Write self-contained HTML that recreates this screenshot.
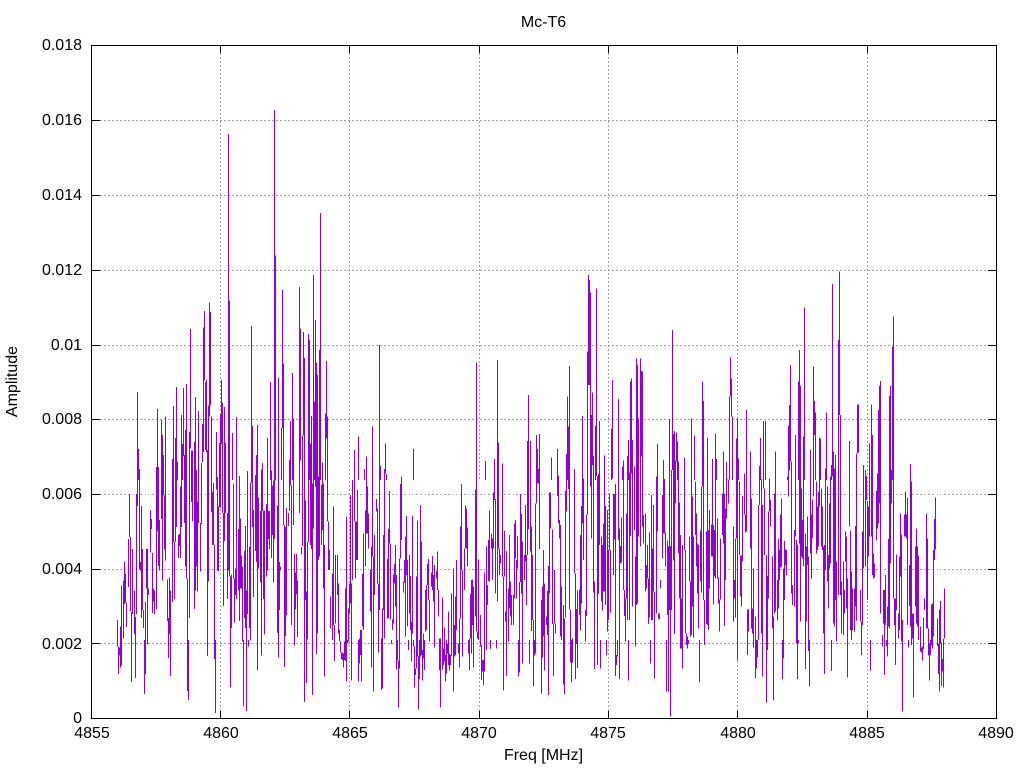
<!DOCTYPE html>
<html><head><meta charset="utf-8"><title>Mc-T6</title>
<style>
html,body{margin:0;padding:0;background:#fff}
svg{display:block}
text{font-family:"Liberation Sans",sans-serif;font-size:16px;fill:#000}
.d{fill:none;stroke:#9400d3;stroke-width:1;vector-effect:non-scaling-stroke;shape-rendering:crispEdges}
</style></head><body>
<svg width="1024" height="768" viewBox="0 0 1024 768" xmlns="http://www.w3.org/2000/svg">
<defs>
<pattern id="gaps" x="0" y="0" width="11" height="4" patternUnits="userSpaceOnUse">
<rect x="1" y="0" width="1" height="4" fill="#fff"/>
<rect x="6" y="0" width="1" height="4" fill="#fff"/>
</pattern>
</defs>
<rect width="1024" height="768" fill="#fff"/>
<g stroke="#a0a0a0" stroke-width="1" stroke-dasharray="2 2" fill="none" shape-rendering="crispEdges">
<path d="M220.5 45V718M349.5 45V718M479.5 45V718M608.5 45V718M737.5 45V718M867.5 45V718"/>
<path d="M92 643.5H996M92 569.5H996M92 494.5H996M92 419.5H996M92 345.5H996M92 270.5H996M92 195.5H996M92 120.5H996"/>
</g>
<g transform="translate(92.17,100) scale(.33333,.3954)">
<path class="d" d="M76 1315V1382M79 1382V1452M82 1385V1405M85 1332V1435M88 1228V1430M91 1330V1363M94 1215V1362M97 1167V1275M100 1197V1272M103 1272V1333M106 1215V1272M109 1110V1232M112 997V1105M115 1105V1292M118 1295V1472M121 1136V1300M124 1200V1265M127 1240V1350M130 1308V1462M133 997V1300M136 738V1027M139 883V1000M142 933V1188M145 1168V1190M148 1027V1310M151 1136V1290M154 1290V1335M157 1335V1502M160 1270V1452M163 1136V1235M166 1136V1377M169 1235V1252M172 1085V1250M175 1037V1145M178 1060V1085M181 1146V1298M184 1235V1268M187 1240V1300M190 1186V1245M193 928V1287M196 781V1090M199 928V1178M202 1062V1190M205 1062V1320M208 808V1060M211 847V1215M214 898V1000M217 1000V1137M220 800V1165M223 1000V1215M226 1213V1318M229 1310V1411M232 1208V1350M235 1240V1457M238 1022V1240M241 908V1270M244 774V1118M247 1118V1262M250 855V1118M253 726V1080M256 915V1218M259 1100V1158M262 1098V1128M265 977V1158M268 797V1080M271 870V1365M274 728V900M277 898V1070M280 835V1180M283 718V1210M286 1210V1495M289 1308V1517M292 840V1310M295 579V882M298 887V1017M301 887V1065M304 1065V1262M307 865V1287M310 751V1240M313 936V1180M316 1015V1243M319 787V1070M322 1070V1155M325 1070V1193M328 918V1072M331 820V915M334 575V890M337 534V710M340 713V885M343 708V890M346 885V1406M349 773V1218M352 512V800M355 536V773M358 800V1042M361 992V1125M364 969V1125M367 1125V1414M370 985V1550M373 840V985M376 953V1190M379 1028V1193M382 867V1030M385 795V1030M388 708V870M391 765V1045M394 1045V1280M397 776V1115M400 867V1045M403 1042V1190M406 1045V1262M409 86V1190M412 508V1205M415 1205V1485M418 1200V1335M421 842V1210M424 970V1210M427 1210V1322M430 1185V1252M433 802V1262M436 1017V1240M439 1085V1240M442 951V1318M445 1058V1235M448 1152V1235M451 1180V1370M454 1335V1532M457 1140V1310M460 1077V1335M463 1240V1545M466 938V1300M469 1135V1382M472 1130V1335M475 968V1367M478 572V968M481 824V1080M484 1037V1257M487 1135V1275M490 948V1140M493 898V1168M496 822V1442M499 1005V1185M502 1080V1137M505 1040V1220M508 934V1405M511 918V1040M514 1040V1262M517 1038V1352M520 1038V1220M523 1022V1205M526 855V1190M529 1040V1110M532 1040V1135M535 713V1135M538 937V1158M541 975V1100M544 962V1220M547 25V1110M550 393V962M553 975V1267M556 1025V1348M559 703V1410M562 1168V1290M565 1180V1190M568 830V1180M571 481V830M574 666V1075M577 1075V1434M580 1080V1355M583 1032V1302M586 992V1300M589 1045V1078M592 910V1040M595 812V975M598 975V1328M601 690V1008M604 805V1075M607 1148V1380M610 1195V1288M613 1148V1250M616 1215V1358M619 1045V1215M622 473V1045M625 578V912M628 1130V1150M631 848V1128M634 587V848M637 652V1522M640 1013V1265M643 1243V1475M646 1118V1365M649 592V1118M652 607V1118"/>
</g>
<g transform="translate(310.17,300) scale(.33333)">
<path class="d" d="M1 430V735M4 348V747M7 550V1185M10 -75V685M13 305V685M16 60V560M19 188V1062M22 225V1000M25 530V780M28 150V770M31 -261V695M34 555V735M37 488V690M40 550V865M43 735V1130M46 340V730M49 183V415M52 350V665M55 665V810M58 750V810M61 890V985M64 820V985M67 820V1020M70 620V975M73 975V1083M76 765V970M79 645V980M82 765V885M85 850V1000M88 990V1025M91 1025V1058M94 1058V1077M97 1058V1080M100 1060V1103M103 1025V1080M106 865V1083M109 650V1145M112 815V1030M115 925V1025M118 850V940M121 585V910M124 850V1142M127 540V840M130 650V850M133 450V665M136 665V835M139 665V780M142 570V780M145 410V1145M148 1015V1090M151 990V1065M154 990V1145M157 822V980M160 700V990M163 507V700M166 632V798M169 470V700M172 560V700M175 640V745M178 540V705M181 808V935M184 740V1103M187 380V770M190 770V1175M193 705V885M196 597V885M199 597V635M202 625V850M205 850V1058M208 135V930M211 498V1015M214 1015V1170M217 925V1165M220 705V930M223 507V1015M226 430V520M229 522V777M232 777V955M235 687V955M238 573V730M241 730V958M244 958V1032M247 958V990M250 823V970M253 792V850M256 735V920M259 825V1108M262 885V1082M265 1082V1223M268 775V1105M271 552V775M274 530V720M277 720V890M280 845V878M283 780V848M286 710V1010M289 648V825M292 780V980M295 825V1050M298 765V940M301 828V990M304 965V1085M307 648V1000M310 447V1040M313 1040V1163M316 1105V1125M319 830V1105M322 662V1070M325 1068V1228M328 830V1137M331 615V1070M334 725V1065M337 1050V1142M340 1000V1075M343 1000V1110M346 870V995M349 855V990M352 792V855M355 777V900M358 900V1025M361 853V940M364 818V860M367 768V870M370 825V905M373 795V1043M376 810V870M379 813V835M382 755V870M385 870V950M388 1015V1110M391 1015V1223M394 805V1010M397 893V1108M400 1045V1095M403 983V1085M406 1065V1145M409 1015V1120M412 1030V1060M415 935V1095M418 1060V1112M421 1065V1095M424 880V1068M427 985V1000M430 805V1175M433 975V1070M436 890V1065M439 780V990M442 865V1000M445 1030V1060M448 955V1103M451 680V955M454 552V810M457 810V1070M460 680V875M463 745V870M466 617V745M469 625V745M472 683V800M475 748V1060M478 1015V1110M481 882V1015M484 840V1060M487 838V975M490 860V1103M493 830V950M496 568V950M499 188V995M502 995V1015M505 778V1020M508 808V1020M511 945V1040M514 1035V1140M517 1080V1115M520 1080V1155M523 818V1115M526 483V1000M529 740V1050M532 855V915M535 720V843M538 632V845M541 662V1047M544 700V745M547 715V840M550 578V745M553 477V600M556 597V880M559 880V1045M562 180V905M565 427V745M568 745V825M571 765V790M574 620V765M577 490V830M580 830V1172M583 693V830M586 935V965M589 753V1128M592 790V925M595 865V1025M598 705V925M601 845V950M604 885V975M607 920V950M610 885V975M613 670V895M616 660V775M619 780V895M622 708V805M625 790V1130M628 846V1118M631 582V846M634 642V880M637 725V1090M640 785V870M643 765V840M646 615V785M649 765V915M652 423V765M655 285V687M658 687V1090"/>
</g>
<g transform="translate(530.17,270) scale(.33333)">
<path class="d" d="M1 513V845M4 770V1083M7 855V1050M10 1050V1248M13 1050V1157M16 700V1150M19 495V700M22 537V640M25 597V640M28 492V837M31 712V990M34 990V1270M37 950V1163M40 840V1100M43 940V1202M46 990V1095M49 1040V1065M52 963V1095M55 888V1275M58 668V970M61 668V775M64 563V775M67 778V1062M70 1060V1218M73 900V1060M76 1060V1090M79 678V1060M82 537V678M85 617V760M88 750V805M91 765V1100M94 950V1110M97 792V1005M100 1005V1243M103 1045V1272M106 663V1043M109 552V725M112 380V655M115 470V657M118 288V1018M121 1018V1177M124 1110V1237M127 1105V1178M130 635V1108M133 597V910M136 910V1227M139 1017V1122M142 962V1194M145 905V965M148 958V1035M151 795V1082M154 708V1000M157 438V760M160 625V870M163 870V1020M166 1020V1115M169 733V1038M172 245V733M175 15V345M178 30V345M181 68V650M184 435V805M187 368V585M190 558V968M193 935V1197M196 468V935M199 55V618M202 618V1185M205 612V972M208 453V825M211 825V1195M214 800V995M217 825V1022M220 760V965M223 557V965M226 708V1005M229 935V1155M232 720V1085M235 840V1050M238 670V840M241 840V1028M244 475V915M247 330V625M250 672V915M253 672V808M256 642V1218M259 1155V1185M262 770V1160M265 387V810M268 775V1227M271 828V880M274 743V878M277 590V875M280 572V960M283 960V1038M286 985V1115M289 730V985M292 558V1050M295 510V1232M298 608V1050M301 335V798M304 325V610M307 510V1010M310 683V780M313 590V780M316 860V1130M319 265V1005M322 285V1000M325 445V800M328 798V1010M331 265V830M334 303V560M337 305V770M340 735V820M343 648V795M346 730V965M349 885V955M352 825V925M355 925V1062M358 788V1043M361 925V1180M364 675V1050M367 835V1050M370 705V965M373 965V1225M376 783V1030M379 620V1030M382 522V785M385 1030V1045M388 1030V1048M391 930V955M394 868V955M397 675V865M400 570V790M403 627V790M406 787V890M409 830V1265M412 812V1035M415 830V1265M418 447V1020M421 828V1340M424 600V1020M427 180V600M430 492V872M433 483V1092M436 572V700M439 487V575M442 515V938M445 575V850M448 697V985M451 795V1135M454 985V1135M457 825V1195M460 630V1010M463 563V840M466 840V1090M469 1090V1125M472 1100V1135M475 870V1120M478 800V935M481 935V1100M484 445V1095M487 680V1010M490 800V1103M493 497V795M496 635V795M499 730V890M502 820V970M505 825V1075M508 843V1238M511 782V935M514 650V968M517 335V650M520 393V990M523 990V1125M526 785V995M529 785V1062M532 503V1065M535 780V1080M538 720V955M541 835V950M544 763V860M547 567V860M550 765V1003M553 780V920M556 490V925M559 567V925M562 745V925M565 922V1000M568 988V1085M571 805V988M574 733V910M577 670V795M580 545V820M583 672V1068M586 715V930M589 575V745M592 628V702M595 628V700M598 380V628M601 262V380M604 325V440M607 440V770M610 770V1055M613 930V985M616 805V1043M619 505V805M622 445V1172M625 565V860M628 635V855M631 857V980M634 857V1010M637 678V875M640 705V770M643 610V733M646 733V788M649 420V785M652 1018V1155M655 1018V1085M658 792V1040"/>
</g>
<g transform="translate(745.17,270) scale(.33333)">
<path class="d" d="M16 545V835M19 685V1075M22 1015V1090M25 895V1133M28 657V1038M31 1040V1226M34 1110V1195M37 1110V1163M40 705V1110M43 588V705M46 504V700M49 627V1090M52 705V1220M55 453V655M58 655V855M61 453V860M64 855V1298M67 918V1140M70 725V985M73 625V725M76 690V770M79 768V960M82 860V1075M85 1040V1292M88 670V1030M91 545V1025M94 885V970M97 930V1052M100 807V1015M103 838V930M106 733V892M109 685V890M112 955V1227M115 895V1165M118 813V990M121 838V885M124 840V915M127 620V945M130 468V680M133 405V600M136 285V575M139 575V970M142 945V1005M145 945V1067M148 780V1010M151 495V800M154 810V1120M157 825V1227M160 335V1120M163 240V820M166 348V1055M169 655V860M172 750V865M175 500V888M178 113V790M181 790V1197M184 830V1055M187 740V885M190 860V1143M193 850V1250M196 540V850M199 733V925M202 688V805M205 290V680M208 393V495M211 427V635M214 635V850M217 710V840M220 665V830M223 502V710M226 505V650M229 655V830M232 710V840M235 830V1090M238 825V1212M241 595V900M244 427V1080M247 650V935M250 855V1015M253 700V895M256 620V880M259 585V1203M262 42V620M265 545V1060M268 595V1070M271 555V990M274 875V1115M277 860V990M280 210V975M283 5V435M286 435V975M289 935V1090M292 785V990M295 875V1095M298 960V1030M301 785V875M304 800V1015M307 925V1223M310 717V925M313 513V770M316 782V1080M319 905V1110M322 955V1080M325 980V1052M328 955V1085M331 768V1010M334 550V1052M337 403V550M340 403V548M343 750V1100M346 960V1055M349 1055V1155M352 785V1065M355 585V895M358 807V1015M361 600V890M364 618V690M367 693V990M370 710V860M373 520V800M376 800V1202M379 403V800M382 495V915M385 850V925M388 880V922M391 790V925M394 663V812M397 610V775M400 420V760M403 348V700M406 333V1030M409 1030V1110M412 1095V1130M415 960V1060M418 960V1215M421 915V1065M424 1010V1128M427 1010V1160M430 807V1070M433 378V1075M436 348V880M439 600V700M442 230V1065M445 140V985M448 985V1065M451 985V1185M454 853V1020M457 987V1070M460 1030V1105M463 860V1080M466 730V920M469 793V1115M472 1050V1325M475 725V1075M478 733V800M481 665V800M484 733V805M487 683V1065M490 875V1133M493 885V1008M496 582V1070M499 635V1125M502 1030V1105M505 1030V1283M508 780V1090M511 830V1010M514 775V1060M517 830V1070M520 857V1110M523 935V1075M526 1070V1145M529 1133V1148M532 1130V1172M535 1043V1137M538 985V1020M541 875V1018M544 732V1075M547 805V1075M550 1075V1157M553 1120V1232M556 1015V1155M559 1003V1127M562 1000V1135M565 840V1100M568 747V870M571 682V838M574 837V1045M577 1045V1128M580 1120V1212M583 1018V1265M586 993V1120M589 1118V1248M592 1167V1205M595 1105V1253M598 955V1105"/>
</g>
<rect x="117" y="480" width="828" height="160" fill="url(#gaps)" shape-rendering="crispEdges"/>
<g stroke="#000" stroke-width="1" fill="none" shape-rendering="crispEdges">
<rect x="91.5" y="45.5" width="905" height="673"/>
<path d="M220.5 45v8M349.5 45v8M479.5 45v8M608.5 45v8M737.5 45v8M867.5 45v8M220.5 719v-8M349.5 719v-8M479.5 719v-8M608.5 719v-8M737.5 719v-8M867.5 719v-8"/>
<path d="M92 643.5h8M92 569.5h8M92 494.5h8M92 419.5h8M92 345.5h8M92 270.5h8M92 195.5h8M92 120.5h8M996 643.5h-8M996 569.5h-8M996 494.5h-8M996 419.5h-8M996 345.5h-8M996 270.5h-8M996 195.5h-8M996 120.5h-8"/>
</g>
<text x="543.5" y="27" text-anchor="middle">Mc-T6</text>
<g text-anchor="end">
<text x="82" y="50">0.018</text>
<text x="82" y="125">0.016</text>
<text x="82" y="200">0.014</text>
<text x="82" y="275">0.012</text>
<text x="82" y="350">0.01</text>
<text x="82" y="424">0.008</text>
<text x="82" y="499">0.006</text>
<text x="82" y="574">0.004</text>
<text x="82" y="649">0.002</text>
<text x="82" y="723">0</text>
</g>
<g text-anchor="middle">
<text x="92" y="738">4855</text>
<text x="221" y="738">4860</text>
<text x="350" y="738">4865</text>
<text x="479" y="738">4870</text>
<text x="608" y="738">4875</text>
<text x="738" y="738">4880</text>
<text x="867" y="738">4885</text>
<text x="996" y="738">4890</text>
<text x="543.5" y="760">Freq [MHz]</text>
<text transform="translate(17,381.5) rotate(-90)" x="0" y="0">Amplitude</text>
</g>
</svg>
</body></html>
